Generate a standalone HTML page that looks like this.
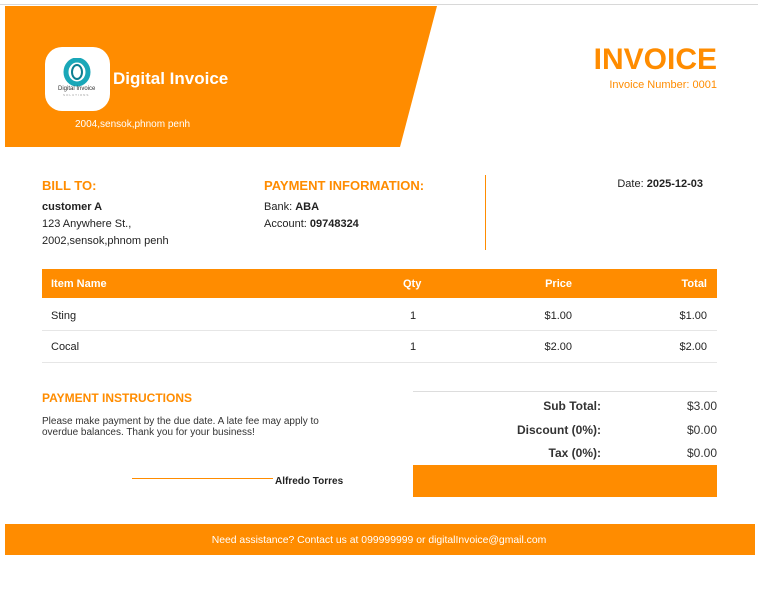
<!DOCTYPE html>
<html><head><meta charset="utf-8"><style>
*{margin:0;padding:0;box-sizing:border-box}
body{width:758px;height:608px;background:#fff;font-family:"Liberation Sans",Arial,sans-serif;position:relative;overflow:hidden;color:#222}
.a{position:absolute;white-space:nowrap}
.o{color:#ff8c00}
.b{font-weight:bold}
</style></head><body>
<div class="a" style="left:0;top:4px;width:758px;height:1px;background:#d8d8d8"></div>
<svg class="a" style="left:0;top:0" width="758" height="150"><polygon points="5,6 437,6 400,147 5,147" fill="#ff8c00"/></svg>
<div class="a" style="left:45px;top:47px;width:65px;height:64px;background:#fff;border-radius:17px"></div>
<svg class="a" style="left:62px;top:58px" width="30" height="30" viewBox="0 0 30 30"><ellipse cx="15" cy="14" rx="11" ry="12" fill="none" stroke="#1aa7b8" stroke-width="5"/><ellipse cx="15" cy="14" rx="5" ry="7" fill="none" stroke="#0d7f91" stroke-width="2"/></svg>
<div class="a" style="left:58px;top:86px;font-size:6px;color:#333">Digital Invoice</div>
<div class="a" style="left:63px;top:93px;font-size:3px;color:#999;letter-spacing:1px">SOLUTIONS</div>
<div class="a b" style="left:113px;top:69px;font-size:17px;color:#fff">Digital Invoice</div>
<div class="a" style="left:75px;top:119px;font-size:10px;color:#fff">2004,sensok,phnom penh</div>
<div class="a b o" style="right:41px;top:43px;font-size:30px">INVOICE</div>
<div class="a o" style="right:41px;top:79px;font-size:11px">Invoice Number: 0001</div>

<div class="a b o" style="left:42px;top:178px;font-size:13px">BILL TO:</div>
<div class="a b" style="left:42px;top:201px;font-size:11px">customer A</div>
<div class="a" style="left:42px;top:218px;font-size:11px">123 Anywhere St.,</div>
<div class="a" style="left:42px;top:235px;font-size:11px">2002,sensok,phnom penh</div>
<div class="a b o" style="left:264px;top:178px;font-size:13px">PAYMENT INFORMATION:</div>
<div class="a" style="left:264px;top:201px;font-size:11px">Bank: <b>ABA</b></div>
<div class="a" style="left:264px;top:218px;font-size:11px">Account: <b>09748324</b></div>
<div class="a" style="left:485px;top:175px;width:1px;height:75px;background:#ff8c00"></div>
<div class="a" style="right:55px;top:178px;font-size:11px">Date: <b>2025-12-03</b></div>

<div class="a" style="left:42px;top:269px;width:675px;height:29px;background:#ff8c00"></div>
<div class="a b" style="left:51px;top:278px;font-size:11px;color:#fff">Item Name</div>
<div class="a b" style="left:403px;top:278px;font-size:11px;color:#fff">Qty</div>
<div class="a b" style="right:186px;top:278px;font-size:11px;color:#fff">Price</div>
<div class="a b" style="right:51px;top:278px;font-size:11px;color:#fff">Total</div>
<div class="a" style="left:51px;top:310px;font-size:11px">Sting</div>
<div class="a" style="left:410px;top:310px;font-size:11px">1</div>
<div class="a" style="right:186px;top:310px;font-size:11px">$1.00</div>
<div class="a" style="right:51px;top:310px;font-size:11px">$1.00</div>
<div class="a" style="left:42px;top:330px;width:675px;height:1px;background:#e6e6e6"></div>
<div class="a" style="left:51px;top:341px;font-size:11px">Cocal</div>
<div class="a" style="left:410px;top:341px;font-size:11px">1</div>
<div class="a" style="right:186px;top:341px;font-size:11px">$2.00</div>
<div class="a" style="right:51px;top:341px;font-size:11px">$2.00</div>
<div class="a" style="left:42px;top:362px;width:675px;height:1px;background:#e6e6e6"></div>

<div class="a b o" style="left:42px;top:391px;font-size:12px">PAYMENT INSTRUCTIONS</div>
<div class="a" style="left:42px;top:416px;font-size:10px;line-height:11px;color:#333">Please make payment by the due date. A late fee may apply to<br>overdue balances. Thank you for your business!</div>
<div class="a" style="left:132px;top:478px;width:141px;height:1px;background:#ff8c00"></div>
<div class="a b" style="left:275px;top:476px;font-size:10px">Alfredo Torres</div>

<div class="a" style="left:413px;top:391px;width:304px;height:1px;background:#ddd"></div>
<div class="a b" style="right:157px;top:399px;font-size:12px;color:#333">Sub Total:</div>
<div class="a" style="right:41px;top:399px;font-size:12px;color:#333">$3.00</div>
<div class="a b" style="right:157px;top:423px;font-size:12px;color:#333">Discount (0%):</div>
<div class="a" style="right:41px;top:423px;font-size:12px;color:#333">$0.00</div>
<div class="a b" style="right:157px;top:446px;font-size:12px;color:#333">Tax (0%):</div>
<div class="a" style="right:41px;top:446px;font-size:12px;color:#333">$0.00</div>
<div class="a" style="left:413px;top:465px;width:304px;height:32px;background:#ff8c00"></div>

<div class="a" style="left:5px;top:524px;width:750px;height:31px;background:#ff8c00"></div>
<div class="a" style="left:0;width:758px;text-align:center;top:535px;font-size:10.4px;color:#fff">Need assistance? Contact us at 099999999 or digitalInvoice@gmail.com</div>
</body></html>
